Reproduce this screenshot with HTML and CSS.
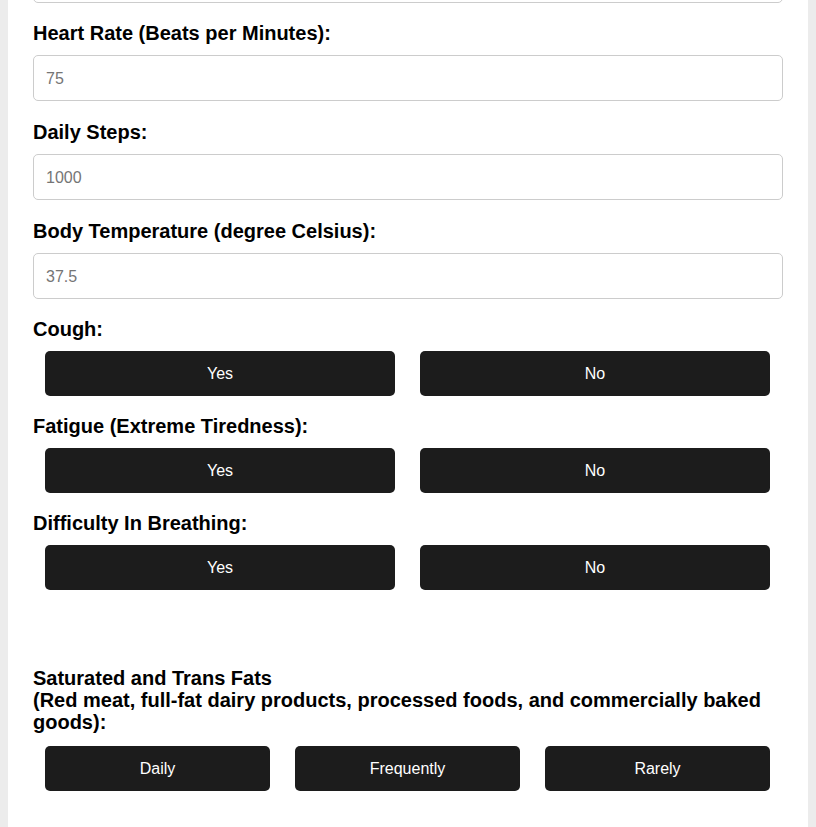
FILE: index.html
```html
<!DOCTYPE html>
<html lang="en">
<head>
<meta charset="utf-8">
<title>Health Form</title>
<link rel="stylesheet" href="styles.css">
</head>
<body>
<div class="page">
  <form class="card">
    <div class="field field-cut">
      <input class="text-input" type="text" placeholder="">
    </div>
    <div class="field">
      <label class="label">Heart Rate (Beats per Minutes):</label>
      <input class="text-input" type="text" placeholder="75">
    </div>
    <div class="field">
      <label class="label">Daily Steps:</label>
      <input class="text-input" type="text" placeholder="1000">
    </div>
    <div class="field field-end">
      <label class="label">Body Temperature (degree Celsius):</label>
      <input class="text-input" type="text" placeholder="37.5">
    </div>
    <div class="field choice">
      <label class="label">Cough:</label>
      <div class="btn-row">
        <button type="button" class="btn">Yes</button>
        <button type="button" class="btn">No</button>
      </div>
    </div>
    <div class="field choice">
      <label class="label">Fatigue (Extreme Tiredness):</label>
      <div class="btn-row">
        <button type="button" class="btn">Yes</button>
        <button type="button" class="btn">No</button>
      </div>
    </div>
    <div class="field choice">
      <label class="label">Difficulty In Breathing:</label>
      <div class="btn-row">
        <button type="button" class="btn">Yes</button>
        <button type="button" class="btn">No</button>
      </div>
    </div>
    <div class="field choice section">
      <label class="label">Saturated and Trans Fats<br>(Red meat, full-fat dairy products, processed foods, and commercially baked goods):</label>
      <div class="btn-row">
        <button type="button" class="btn">Daily</button>
        <button type="button" class="btn">Frequently</button>
        <button type="button" class="btn">Rarely</button>
      </div>
    </div>
  </form>
</div>
</body>
</html>
```

FILE: styles.css
```css
html, body {
  margin: 0;
  padding: 0;
  background: #ececec;
  font-family: "Liberation Sans", Arial, sans-serif;
}

.page {
  padding: 0 8px;
  min-height: 827px;
  overflow: hidden;
}

.card {
  background: #ffffff;
  padding: 0 25px 40px;
  min-height: 827px;
  box-sizing: border-box;
}

.field {
  display: flex;
  flex-direction: column;
  margin-bottom: 20px;
}

.field-cut {
  margin-top: -43px;
  margin-bottom: 19px;
}

.field-end {
  margin-bottom: 19px;
}

.field.choice {
  margin-bottom: 19px;
}

.label {
  font-size: 20px;
  font-weight: bold;
  line-height: 22px;
  color: #000;
  margin-bottom: 11px;
}

.text-input {
  box-sizing: border-box;
  height: 46px;
  width: 100%;
  padding: 1px 12px 0;
  border: 1px solid #cccccc;
  border-radius: 5px;
  font-family: "Liberation Sans", Arial, sans-serif;
  font-size: 16px;
  color: #333;
  background: #fff;
  outline: none;
}

.text-input::placeholder {
  color: #757575;
}

.btn-row {
  display: flex;
  gap: 25px;
  padding: 0 13px 0 12px;
}

.btn {
  flex: 1;
  height: 45px;
  border: none;
  border-radius: 5px;
  background: #1c1c1c;
  color: #ffffff;
  font-family: "Liberation Sans", Arial, sans-serif;
  font-size: 16px;
  cursor: pointer;
}

.section {
  margin-top: 77px;
}

.section .label {
  margin-bottom: 13px;
}
```
